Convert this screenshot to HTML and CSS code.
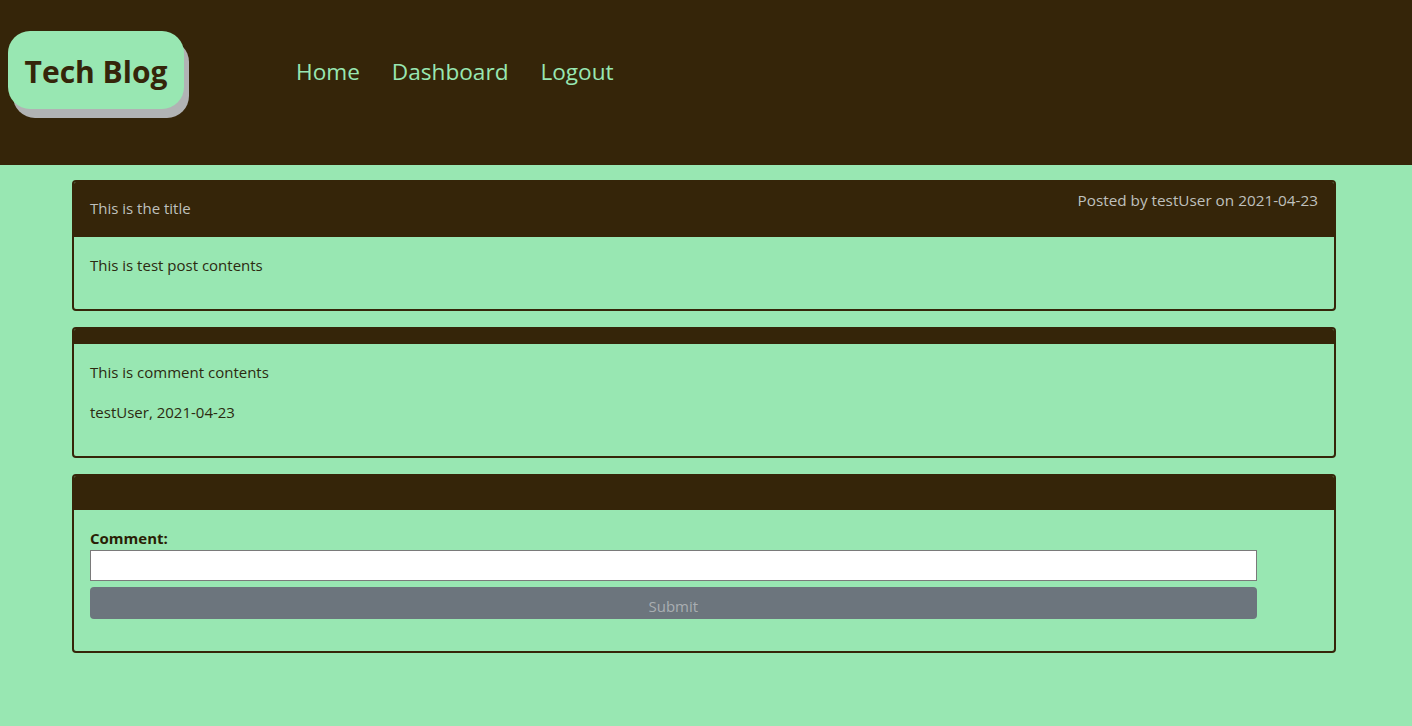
FILE: index.html
```html
<!DOCTYPE html>
<html>
<head>
<meta charset="utf-8">
<title>Tech Blog</title>
<link rel="stylesheet" href="styles.css">
</head>
<body>
<header class="site-header">
  <div class="logo">Tech Blog</div>
  <nav class="nav">
    <a href="#">Home</a>
    <a href="#">Dashboard</a>
    <a href="#">Logout</a>
  </nav>
</header>
<main class="main">
  <section class="card">
    <div class="card-header post-header">
      <span class="post-title">This is the title</span>
      <span class="post-meta">Posted by testUser on 2021-04-23</span>
    </div>
    <div class="card-body">
      <p>This is test post contents</p>
    </div>
  </section>
  <section class="card">
    <div class="card-header thin"></div>
    <div class="card-body">
      <p>This is comment contents</p>
      <p>testUser, 2021-04-23</p>
    </div>
  </section>
  <section class="card">
    <div class="card-header mid"></div>
    <div class="card-body form-body">
      <label class="label" for="c">Comment:</label>
      <input class="input" id="c" type="text">
      <button class="btn" type="button">Submit</button>
    </div>
  </section>
</main>
</body>
</html>
```
FILE: styles.css
```css
* { box-sizing: border-box; }
html, body { margin: 0; padding: 0; }
body {
  background: #98e7b2;
  font-family: "Open Sans", "Noto Sans", sans-serif;
  font-size: 15px;
  color: #2c2a10;
  min-height: 726px;
}
.site-header {
  background: #352509;
  height: 165px;
  display: flex;
  align-items: flex-start;
  padding: 31px 0 0 8px;
}
.logo {
  background: #98e7b2;
  color: #35250a;
  font-weight: 700;
  font-size: 30px;
  width: 176px;
  height: 78px;
  padding-top: 3px;
  display: flex;
  align-items: center;
  justify-content: center;
  border-radius: 22px;
  box-shadow: 5px 9px 0 #b1b3b4;
}
.nav {
  display: flex;
  gap: 32px;
  margin-left: 112px;
  margin-top: 25px;
}
.nav a {
  color: #98e7b2;
  text-decoration: none;
  font-size: 22.6px;
  line-height: 32px;
}
.main {
  padding: 15px 76px 40px 72px;
}
.card {
  border: 2px solid #352509;
  border-radius: 4px;
  margin-bottom: 16px;
  overflow: hidden;
}
.card-header {
  background: #352509;
  color: #bfc0bd;
}
.post-header {
  height: 55px;
  display: flex;
  justify-content: space-between;
  align-items: flex-start;
  padding: 8px 16px 0 16px;
}
.post-title { margin-top: 8px; }
.post-meta { font-size: 15.3px; }
.thin { height: 15px; }
.mid { height: 34px; }
.card-body {
  padding: 16px 16px 16px 16px;
}
.card-body p {
  margin: 0 0 16px 0;
  line-height: 24px;
}
.form-body { padding-bottom: 32px; }
.label {
  display: block;
  font-weight: 700;
  line-height: 24px;
  color: #2a1e05;
}
.input {
  display: block;
  width: 95%;
  height: 31px;
  border: 1px solid #7a7a7a;
  background: #fff;
  margin: 0;
}
.btn {
  display: block;
  width: 95%;
  height: 32px;
  margin-top: 6px;
  background: #6c757d;
  border: none;
  border-radius: 4px;
  color: #a9aeb2;
  font-family: inherit;
  font-size: 15px;
  padding-top: 6px;
}
```
